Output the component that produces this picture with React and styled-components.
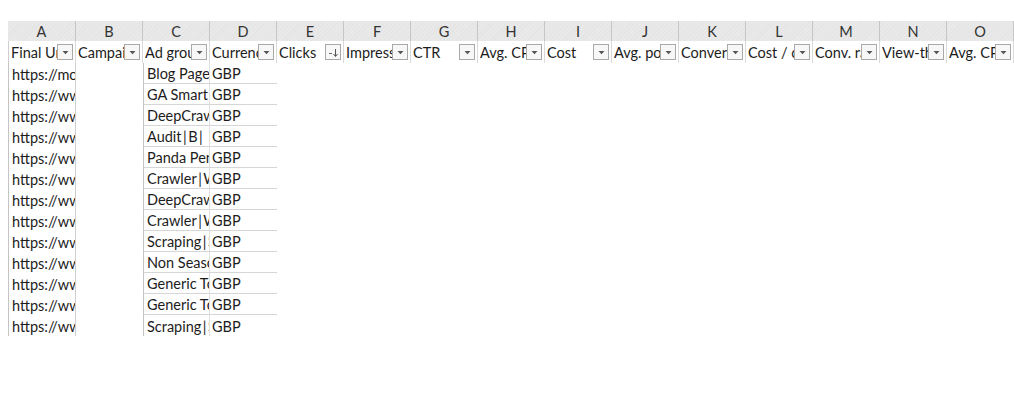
import React from "react";
import styled, { createGlobalStyle } from "styled-components";

const GlobalStyle = createGlobalStyle`
  html, body { margin: 0; padding: 0; background: #ffffff; }
  body { font-family: "Lato", "Open Sans", sans-serif; color: #1c1c1c; }
`;

const COLS = "68px repeat(14, 67px)";

const Sheet = styled.div`
  padding: 21px 0 0 8px;
  width: 1006px;
  height: 399px;
  overflow: hidden;
`;

const ColumnBar = styled.div`
  display: grid;
  grid-template-columns: ${COLS};
  height: 20px;
  background: repeating-linear-gradient(135deg, #e4e4e4 0 1px, #e9e9e9 1px 3px);
`;

const ColLetter = styled.div`
  display: flex;
  align-items: center;
  justify-content: center;
  font-size: 14.5px;
  color: #333333;
  border-right: 1px solid #c6c6c6;
  box-sizing: border-box;
`;

const HeaderRow = styled.div`
  display: grid;
  grid-template-columns: ${COLS};
  height: 22px;
`;

const HeaderCell = styled.div`
  display: flex;
  align-items: center;
  box-sizing: border-box;
  border-right: 1px solid #dadada;
  border-left: ${(p) => (p.$first ? "1px solid #cfcfcf" : "none")};
  padding-left: 2px;
  padding-right: 2px;
  overflow: hidden;
`;

const HeaderText = styled.span`
  flex: 1;
  min-width: 0;
  overflow: hidden;
  white-space: nowrap;
  font-size: 14.5px;
  color: #1c1c1c;
`;

const FilterButton = styled.div`
  flex: none;
  width: 16px;
  height: 16px;
  box-sizing: border-box;
  border: 1px solid #a9a9a9;
  background: #f7f7f7;
  display: flex;
  align-items: center;
  justify-content: center;
`;

const DataRow = styled.div`
  display: grid;
  grid-template-columns: ${COLS};
  height: 21px;
`;

const DataCell = styled.div`
  box-sizing: border-box;
  display: flex;
  align-items: center;
  padding-left: ${(p) => (p.$kind === "d" ? "2px" : "3px")};
  padding-top: 1px;
  font-size: 14.5px;
  white-space: pre;
  overflow: hidden;
  border-left: ${(p) => (p.$kind === "a" || p.$kind === "c" ? "1px solid #c4c4c4" : "none")};
  border-right: ${(p) =>
    p.$kind === "a" ? "1px solid #d0d0d0" : p.$kind === "c" ? "1px solid #e0e0e0" : "none"};
  border-bottom: ${(p) =>
    (p.$kind === "c" || p.$kind === "d") && !p.$last ? "1px solid #d6d6d6" : "none"};
`;

const Pipe = styled.span`
  margin: 0 1.5px;
`;

const Arrow = () => (
  <svg width="7" height="5" viewBox="0 0 7 5">
    <path d="M0.5 1 L6.5 1 L3.5 4.2 Z" fill="#555" />
  </svg>
);

const SortArrow = () => (
  <svg width="11" height="11" viewBox="0 0 11 11">
    <path d="M1 6.5 H4" stroke="#666" strokeWidth="1" />
    <path d="M7.5 2 V9" stroke="#555" strokeWidth="1" />
    <path d="M5.5 7 L7.5 9.5 L9.5 7" fill="none" stroke="#555" strokeWidth="1" />
  </svg>
);

const withPipes = (text) =>
  text.split("|").flatMap((part, i) => (i === 0 ? [part] : [<Pipe key={i}>|</Pipe>, part]));

const letters = "ABCDEFGHIJKLMNO".split("");

const headers = [
  "Final Url",
  "Campaign",
  "Ad group",
  "Currency",
  "Clicks",
  "Impressions",
  "CTR",
  "Avg. CPC",
  "Cost",
  "Avg. position",
  "Conversions",
  "Cost / conv.",
  "Conv. rate",
  "View-through conv.",
  "Avg. CPM",
];

const rows = [
  ["https://moz.com/", "Blog Page Target"],
  ["https://www.deepcrawl.com/", "GA Smart Goals"],
  ["https://www.deepcrawl.com/", "DeepCrawl Brand"],
  ["https://www.deepcrawl.com/", "Audit|B|   Site Audit"],
  ["https://www.deepcrawl.com/", "Panda Penalty"],
  ["https://www.deepcrawl.com/", "Crawler|Website"],
  ["https://www.deepcrawl.com/", "DeepCrawl Tool"],
  ["https://www.deepcrawl.com/", "Crawler|Website"],
  ["https://www.deepcrawl.com/", "Scraping|Site"],
  ["https://www.deepcrawl.com/", "Non Seasonal"],
  ["https://www.deepcrawl.com/", "Generic Tool"],
  ["https://www.deepcrawl.com/", "Generic Tool"],
  ["https://www.deepcrawl.com/", "Scraping|Site"],
];

export default function App() {
  return (
    <>
      <GlobalStyle />
      <Sheet>
        <ColumnBar>
          {letters.map((l) => (
            <ColLetter key={l}>{l}</ColLetter>
          ))}
        </ColumnBar>
        <HeaderRow>
          {headers.map((h, i) => (
            <HeaderCell key={h} $first={i === 0}>
              <HeaderText>{h}</HeaderText>
              <FilterButton>{h === "Clicks" ? <SortArrow /> : <Arrow />}</FilterButton>
            </HeaderCell>
          ))}
        </HeaderRow>
        {rows.map(([url, group], r) => {
          const last = r === rows.length - 1;
          return (
            <DataRow key={r}>
              <DataCell $kind="a" $last={last}>{url}</DataCell>
              <DataCell $kind="b" $last={last} />
              <DataCell $kind="c" $last={last}>{withPipes(group)}</DataCell>
              <DataCell $kind="d" $last={last}>GBP</DataCell>
            </DataRow>
          );
        })}
      </Sheet>
    </>
  );
}
